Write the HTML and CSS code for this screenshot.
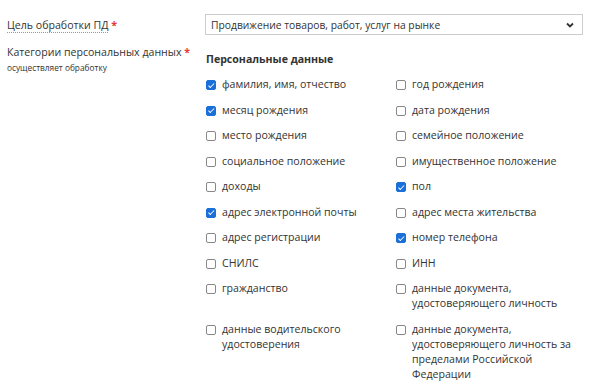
FILE: index.html
```html
<!DOCTYPE html>
<html lang="ru">
<head>
    <meta charset="UTF-8">
    <title>Цель обработки ПД</title>
    <link rel="stylesheet" href="styles.css">
</head>
<body>
    <div class="form">
        <div class="row">
            <div class="label first">
                <span class="hint">Цель обработки ПД</span> <span class="req">*</span>
            </div>
            <div class="field">
                <div class="select">
                    <span>Продвижение товаров, работ, услуг на рынке</span>
                    <svg width="8" height="6" viewBox="0 0 8 6"><path d="M1 1.5 L4 4.5 L7 1.5" fill="none" stroke="#333" stroke-width="1.8"/></svg>
                </div>
            </div>
        </div>

        <div class="row">
            <div class="label">
                Категории персональных данных <span class="req">*</span>
                <div class="sub">осуществляет обработку</div>
            </div>
            <div class="field">
                <div class="group-title">Персональные данные</div>
                <div class="checks">
                    <div class="check"><span class="box on"></span><span>фамилия, имя, отчество</span></div>
                    <div class="check"><span class="box"></span><span>год рождения</span></div>
                    <div class="check"><span class="box on"></span><span>месяц рождения</span></div>
                    <div class="check"><span class="box"></span><span>дата рождения</span></div>
                    <div class="check"><span class="box"></span><span>место рождения</span></div>
                    <div class="check"><span class="box"></span><span>семейное положение</span></div>
                    <div class="check"><span class="box"></span><span>социальное положение</span></div>
                    <div class="check"><span class="box"></span><span>имущественное положение</span></div>
                    <div class="check"><span class="box"></span><span>доходы</span></div>
                    <div class="check"><span class="box on"></span><span>пол</span></div>
                    <div class="check"><span class="box on"></span><span>адрес электронной почты</span></div>
                    <div class="check"><span class="box"></span><span>адрес места жительства</span></div>
                    <div class="check"><span class="box"></span><span>адрес регистрации</span></div>
                    <div class="check"><span class="box on"></span><span>номер телефона</span></div>
                    <div class="check"><span class="box"></span><span>СНИЛС</span></div>
                    <div class="check"><span class="box"></span><span>ИНН</span></div>
                    <div class="check"><span class="box"></span><span>гражданство</span></div>
                    <div class="check"><span class="box"></span><span>данные документа, удостоверяющего личность</span></div>
                    <div class="check"><span class="box"></span><span>данные водительского удостоверения</span></div>
                    <div class="check"><span class="box"></span><span>данные документа, удостоверяющего личность за пределами Российской Федерации</span></div>
                </div>
            </div>
        </div>
    </div>
</body>
</html>
```

FILE: styles.css
```css
body {
    margin: 0;
    background-color: #fff;
    font-family: "Open Sans", "Noto Sans", sans-serif;
    color: #333;
}

.form {
    padding: 14px 0 0 7px;
}

.row {
    display: flex;
}

.label {
    width: 198px;
    font-size: 10.6px;
    line-height: 17px;
}

.label.first {
    line-height: 20px;
    padding-top: 1px;
}

.hint {
    border-bottom: 1px dotted #999;
}

.req {
    color: #e53935;
    font-weight: 700;
}

.sub {
    font-size: 8.3px;
    line-height: 14px;
}

.field {
    width: 378px;
}

.select {
    height: 18px;
    border: 1px solid #ccc;
    display: flex;
    align-items: center;
    justify-content: space-between;
    padding: 1px 8px 0 5px;
    box-sizing: content-box;
    font-size: 10.3px;
    margin-bottom: 9px;
}

.select svg {
    margin-top: -1px;
}

.group-title {
    font-weight: 700;
    font-size: 10.6px;
    line-height: 18px;
    margin: 6px 0 9px 1px;
}

.checks {
    display: grid;
    grid-template-columns: 190px 180px;
    row-gap: 10.5px;
    padding-left: 1px;
}

.check {
    display: flex;
    align-items: flex-start;
    font-size: 10.6px;
    line-height: 15px;
}

.box {
    flex: none;
    width: 8px;
    height: 8px;
    border: 1px solid #888;
    border-radius: 2px;
    margin: 3px 6px 0 0;
    position: relative;
}

.box.on {
    background-color: #1a6fd8;
    border-color: #1a6fd8;
}

.box.on::after {
    content: "";
    position: absolute;
    left: 2.5px;
    top: 0.5px;
    width: 2px;
    height: 4.5px;
    border: solid #fff;
    border-width: 0 1.5px 1.5px 0;
    transform: rotate(45deg);
}
```
